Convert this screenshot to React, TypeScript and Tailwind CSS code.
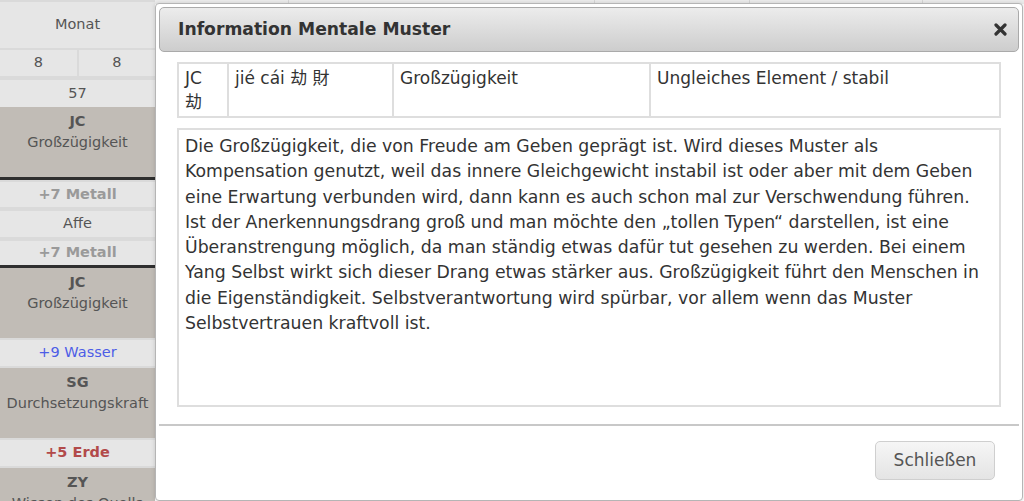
const FONT = "font-['DejaVu_Sans',sans-serif]";

type Cell = {
  kind: "plain" | "gray" | "dark";
  top?: string;
  bottom?: string;
  tone?: string;
  h: string;
  split?: string[];
  edge?: boolean;
};

const COLUMN: Cell[] = [
  { kind: "plain", top: "Monat", h: "h-[50px]", edge: true },
  { kind: "plain", split: ["8", "8"], h: "h-[28px]" },
  { kind: "plain", top: "57", h: "h-[29px]" },
  { kind: "gray", top: "JC", bottom: "Großzügigkeit", h: "h-[70px]" },
  { kind: "dark", h: "h-[3px]" },
  { kind: "plain", top: "+7 Metall", tone: "font-bold text-[#9a9a9a]", h: "h-[29px]", edge: true },
  { kind: "plain", top: "Affe", h: "h-[30px]", edge: true },
  { kind: "plain", top: "+7 Metall", tone: "font-bold text-[#9a9a9a]", h: "h-[26px]" },
  { kind: "dark", h: "h-[3px]" },
  { kind: "gray", top: "JC", bottom: "Großzügigkeit", h: "h-[70px]" },
  { kind: "plain", top: "+9 Wasser", tone: "text-[#4d5de6]", h: "h-[30px]", edge: true },
  { kind: "gray", top: "SG", bottom: "Durchsetzungskraft", h: "h-[70px]" },
  { kind: "plain", top: "+5 Erde", tone: "font-bold text-[#b24a4a]", h: "h-[30px]", edge: true },
  { kind: "gray", top: "ZY", bottom: "Wissen des Quells", h: "h-[60px]" },
];

function SideColumn() {
  return (
    <div className="flex w-[155px] shrink-0 flex-col text-[14.5px]">
      {COLUMN.map((c, i) => {
        if (c.kind === "dark") return <div key={i} className={`${c.h} shrink-0 bg-[#2f2f2f]`} />;
        if (c.split)
          return (
            <div key={i} className={`${c.h} flex shrink-0 border-b-2 border-[#dadada]`}>
              {c.split.map((s, j) => (
                <div
                  key={j}
                  className={`flex flex-1 items-center justify-center bg-[#e6e6e6] text-[#555] ${j === 0 ? "border-r-2 border-[#dadada]" : ""}`}
                >
                  {s}
                </div>
              ))}
            </div>
          );
        if (c.kind === "gray")
          return (
            <div key={i} className={`${c.h} flex shrink-0 flex-col items-center bg-[#c1bcb6] pt-[4px] leading-[21px] text-[#555]`}>
              <div className="font-bold">{c.top}</div>
              <div>{c.bottom}</div>
            </div>
          );
        return (
          <div
            key={i}
            className={`${c.h} flex shrink-0 items-center justify-center bg-[#e6e6e6] ${c.edge ? "border-y-2" : "border-t-2"} border-[#dadada] ${c.tone ?? "text-[#555]"}`}
          >
            {c.top}
          </div>
        );
      })}
    </div>
  );
}

// line breaks as they fall in the original rendering
const BODY_LINES = [
  "Die Großzügigkeit, die von Freude am Geben geprägt ist. Wird dieses Muster als",
  "Kompensation genutzt, weil das innere Gleichgewicht instabil ist oder aber mit dem Geben",
  "eine Erwartung verbunden wird, dann kann es auch schon mal zur Verschwendung führen.",
  "Ist der Anerkennungsdrang groß und man möchte den „tollen Typen“ darstellen, ist eine",
  "Überanstrengung möglich, da man ständig etwas dafür tut gesehen zu werden. Bei einem",
  "Yang Selbst wirkt sich dieser Drang etwas stärker aus. Großzügigkeit führt den Menschen in",
  "die Eigenständigkeit. Selbstverantwortung wird spürbar, vor allem wenn das Muster",
  "Selbstvertrauen kraftvoll ist.",
];

function Dialog() {
  return (
    <div className="absolute left-[155px] top-[3px] flex h-[498px] w-[868px] flex-col rounded-[4px] border border-[#b5b5b5] bg-white p-[3px] shadow-[0_0_4px_rgba(0,0,0,0.15)]">
      <div className="flex h-[45px] items-center justify-between rounded-[5px] border border-[#aaa] bg-gradient-to-b from-[#ececec] to-[#cdcdcd] pl-[18px] pr-[11px]">
        <h2 className="text-[17.2px] font-bold text-[#333]">Information Mentale Muster</h2>
        <svg width="13" height="13" viewBox="0 0 13 13">
          <path d="M2 2 L11 11 M11 2 L2 11" stroke="#333" strokeWidth="3.2" strokeLinecap="round" />
        </svg>
      </div>

      <div className="px-[18px] pt-[10px]">
        <div className="grid h-[56px] grid-cols-[48px_165px_257px_1fr] border-2 border-[#dedede] text-[17px] leading-[24px] text-[#333]">
          <div className="px-[6px] pt-[2px] font-['DejaVu_Sans','Noto_Sans_CJK_SC',sans-serif]">
            JC
            <br />劫
          </div>
          <div className="border-l-2 border-[#dedede] px-[6px] pt-[2px] font-['DejaVu_Sans','Noto_Sans_CJK_SC',sans-serif]">
            jié cái 劫 財
          </div>
          <div className="border-l-2 border-[#dedede] px-[6px] pt-[2px]">Großzügigkeit</div>
          <div className="border-l-2 border-[#dedede] px-[6px] pt-[2px]">Ungleiches Element / stabil</div>
        </div>

        <div className="mt-[10px] h-[279px] overflow-hidden border-2 border-[#dedede] px-[6px] pt-[4px] text-[17.3px] leading-[25.3px] text-[#333]">
          {BODY_LINES.map((l) => (
            <div key={l} className="whitespace-nowrap">
              {l}
            </div>
          ))}
        </div>
      </div>

      <div className="mt-[17px] border-t-2 border-[#c8c8c8]" />

      <div className="flex justify-end pr-[24px] pt-[15px]">
        <button
          type="button"
          className="h-[39px] w-[120px] rounded-[5px] border border-[#cfcfcf] bg-gradient-to-b from-[#f6f6f6] to-[#e4e4e4] text-[17px] text-[#555]"
        >
          Schließen
        </button>
      </div>
    </div>
  );
}

export default function App() {
  return (
    <div className={`relative h-[501px] w-[1024px] overflow-hidden bg-white ${FONT}`}>
      <div className="flex h-full">
        <SideColumn />
        <div className="grid h-[4px] flex-1 grid-cols-[134px_306px_155px_173px_1fr] bg-[#ececec]">
          <div className="border-r border-[#d6d6d6]" />
          <div className="border-r border-[#d6d6d6]" />
          <div className="border-r border-[#d6d6d6]" />
          <div className="border-r border-[#d6d6d6]" />
          <div />
        </div>
      </div>
      <Dialog />
    </div>
  );
}
